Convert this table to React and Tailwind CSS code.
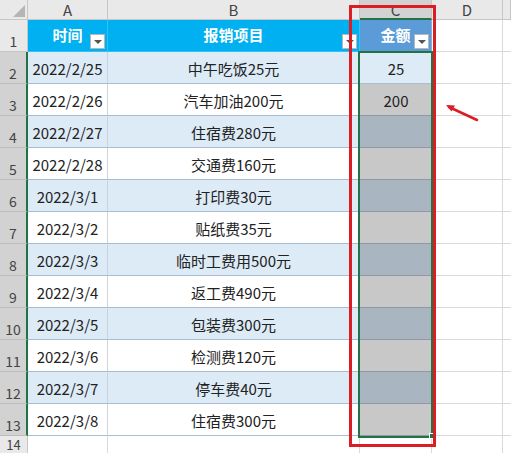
import React from 'react';

const rows = [
  ['2022/2/25', '中午吃饭25元', '25'],
  ['2022/2/26', '汽车加油200元', '200'],
  ['2022/2/27', '住宿费280元', ''],
  ['2022/2/28', '交通费160元', ''],
  ['2022/3/1', '打印费30元', ''],
  ['2022/3/2', '贴纸费35元', ''],
  ['2022/3/3', '临时工费用500元', ''],
  ['2022/3/4', '返工费490元', ''],
  ['2022/3/5', '包装费300元', ''],
  ['2022/3/6', '检测费120元', ''],
  ['2022/3/7', '停车费40元', ''],
  ['2022/3/8', '住宿费300元', ''],
];

const FilterBtn = () => (
  <span className="absolute right-[2px] top-[14px] w-[15px] h-[15px] bg-white border border-[#b8b8b8] flex items-center justify-center">
    <span className="w-0 h-0 border-l-[4px] border-r-[4px] border-t-[4px] border-l-transparent border-r-transparent border-t-[#555]" />
  </span>
);

const ColHead = ({ label, active }) => (
  <div
    className={
      active
        ? 'bg-[#d2d2d2] border-r border-[#c6c6c6] border-b-2 border-b-[#217346] flex items-center justify-center text-[15px] leading-none text-[#444]'
        : 'bg-[#e9e9e9] border-r border-b border-[#c6c6c6] flex items-center justify-center text-[15px] leading-none text-[#444]'
    }
  >
    {label}
  </div>
);

const RowHead = ({ n, active }) => (
  <div
    className={
      active
        ? 'bg-[#d2d2d2] border-b border-[#bdbdbd] border-r-2 border-r-[#217346] flex items-end justify-center pb-[3px] text-[14px] leading-none text-[#444] overflow-hidden'
        : 'bg-[#e9e9e9] border-b border-r border-[#c6c6c6] flex items-end justify-center pb-[3px] text-[14px] leading-none text-[#444] overflow-hidden'
    }
  >
    {n}
  </div>
);

export default function App() {
  return (
    <div
      className="relative w-[511px] h-[453px] overflow-hidden bg-white"
      style={{ fontFamily: '"Noto Sans CJK SC", "Noto Sans", sans-serif' }}
    >
      <div className="grid grid-cols-[28px_80px_252px_72px_71px_1fr] grid-rows-[20px_repeat(13,32px)_17px] text-[#222]">
        {/* corner */}
        <div className="relative bg-[#e9e9e9] border-r border-b border-[#c6c6c6]">
          <svg className="absolute right-[2px] bottom-[2px]" width="12" height="12" viewBox="0 0 12 12">
            <path d="M12 0 L12 12 L0 12 Z" fill="#b5b5b5" />
          </svg>
        </div>
        <ColHead label="A" />
        <ColHead label="B" />
        <ColHead label="C" active />
        <ColHead label="D" />
        <ColHead label="" />

        {/* header row */}
        <RowHead n="1" />
        <div className="relative bg-[#00b0f0] border-r border-b border-[#33c0f3] flex items-center justify-center text-white font-bold text-[15px] pb-[1px]">
          时间
          <FilterBtn />
        </div>
        <div className="relative bg-[#00b0f0] border-r border-b border-[#33c0f3] flex items-center justify-center text-white font-bold text-[15px] pb-[1px]">
          报销项目
          <FilterBtn />
        </div>
        <div className="relative bg-[#5a9bd8] border-r border-b border-[#7fb0e0] flex items-center justify-center text-white font-bold text-[15px] pb-[1px]">
          金额
          <FilterBtn />
        </div>
        <div className="border-r border-b border-[#d9d9d9]" />
        <div className="border-b border-[#d9d9d9]" />

        {rows.map((r, i) => {
          const band = i % 2 === 0;
          return (
            <React.Fragment key={i}>
              <RowHead n={i + 2} active />
              <div
                className={
                  band
                    ? 'bg-[#ddebf7] border-r border-r-[#c9d3dd] border-b border-b-[#a9bdd2] flex items-center justify-center text-[15px] pt-[3px]'
                    : 'bg-white border-r border-r-[#d4d4d4] border-b border-b-[#a9bdd2] flex items-center justify-center text-[15px] pt-[3px]'
                }
              >
                {r[0]}
              </div>
              <div
                className={
                  band
                    ? 'bg-[#ddebf7] border-r border-r-[#c9d3dd] border-b border-b-[#a9bdd2] flex items-center justify-center text-[15px] pt-[3px]'
                    : 'bg-white border-r border-r-[#d4d4d4] border-b border-b-[#a9bdd2] flex items-center justify-center text-[15px] pt-[3px]'
                }
              >
                {r[1]}
              </div>
              <div
                className={
                  i === 0
                    ? 'bg-[#ddebf7] border-b border-b-[#a9bdd2] flex items-center justify-center text-[15px] pt-[3px]'
                    : band
                      ? 'bg-[#aab5c2] border-b border-b-[#8e99a6] flex items-center justify-center text-[15px] pt-[3px]'
                      : 'bg-[#c8c8c8] border-b border-b-[#8e99a6] flex items-center justify-center text-[15px] pt-[3px]'
                }
              >
                {r[2]}
              </div>
              <div className="border-r border-b border-[#d9d9d9]" />
              <div className="border-b border-[#d9d9d9]" />
            </React.Fragment>
          );
        })}

        <div className="bg-[#e9e9e9] border-r border-[#c6c6c6] flex items-start justify-center pt-[2px] text-[13px] leading-[14px] text-[#444]">14</div>
        <div className="border-r border-[#d9d9d9]" />
        <div className="border-r border-[#d9d9d9]" />
        <div className="border-r border-[#d9d9d9]" />
        <div className="border-r border-[#d9d9d9]" />
        <div />
      </div>

      {/* selection outline */}
      <div className="absolute left-[358px] top-[51px] w-[75px] h-[387px] border-2 border-[#217346] pointer-events-none" />
      <div className="absolute left-[429px] top-[433px] w-[6px] h-[6px] bg-[#217346] border border-white" />

      {/* red annotation box */}
      <div className="absolute left-[349px] top-[5px] w-[87px] h-[442px] border-[3px] border-[#dc1d24] pointer-events-none" />

      {/* red arrow */}
      <svg className="absolute left-[440px] top-[98px]" width="42" height="28" viewBox="0 0 42 28">
        <line x1="37" y1="22" x2="9" y2="9" stroke="#dc1d24" strokeWidth="2.5" strokeLinecap="round" />
        <path d="M6 7 L15 7.5 L11.5 13.5 Z" fill="#dc1d24" />
      </svg>
    </div>
  );
}
